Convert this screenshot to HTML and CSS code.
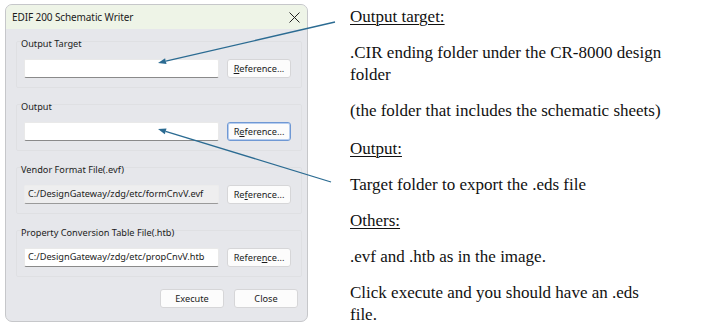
FILE: index.html
```html
<!DOCTYPE html>
<html>
<head>
<meta charset="utf-8">
<link rel="stylesheet" href="styles.css">
</head>
<body>
<div class="page">
  <div class="window">
    <div class="titlebar">
      <span class="title">EDIF 200 Schematic Writer</span>
      <svg class="close" width="11" height="11" viewBox="0 0 11 11"><path d="M0.5 0.5 L10.5 10.5 M10.5 0.5 L0.5 10.5" stroke="#222" stroke-width="1"/></svg>
    </div>
    <div class="body">
      <div class="group">
        <div class="glabel">Output Target</div>
        <div class="row">
          <div class="input"></div>
          <div class="btn"><u>R</u>eference...</div>
        </div>
      </div>
      <div class="group">
        <div class="glabel">Output</div>
        <div class="row">
          <div class="input"></div>
          <div class="btn focus">R<u>e</u>ference...</div>
        </div>
      </div>
      <div class="group">
        <div class="glabel">Vendor Format File(.evf)</div>
        <div class="row">
          <div class="input grey">C:/DesignGateway/zdg/etc/formCnvV.evf</div>
          <div class="btn">Re<u>f</u>erence...</div>
        </div>
      </div>
      <div class="group">
        <div class="glabel">Property Conversion Table File(.htb)</div>
        <div class="row">
          <div class="input">C:/DesignGateway/zdg/etc/propCnvV.htb</div>
          <div class="btn">Refere<u>n</u>ce...</div>
        </div>
      </div>
      <div class="actions">
        <div class="btn">Execute</div>
        <div class="btn">Close</div>
      </div>
    </div>
  </div>
  <div class="notes">
    <p class="head">Output target:</p>
    <p>.CIR ending folder under the CR-8000 design folder</p>
    <p class="gap">(the folder that includes the schematic sheets)</p>
    <p class="head">Output:</p>
    <p>Target folder to export the .eds file</p>
    <p class="head">Others:</p>
    <p>.evf and .htb as in the image.</p>
    <p>Click execute and you should have an .eds file.</p>
  </div>
  <svg class="arrows" width="714" height="329" viewBox="0 0 714 329">
    <line x1="335" y1="22" x2="165.8" y2="61.2" stroke="#2b6b92" stroke-width="1.3"/>
    <polygon points="158,63 166.5,64.1 165.1,58.3" fill="#2b6b92"/>
    <line x1="331" y1="182" x2="165.6" y2="131.3" stroke="#2b6b92" stroke-width="1.3"/>
    <polygon points="158,129 164.8,134.2 166.5,128.5" fill="#2b6b92"/>
  </svg>
</div>
</body>
</html>
```
FILE: styles.css
```css
html, body {
  margin: 0;
  padding: 0;
  background: #ffffff;
}

.page {
  position: relative;
  width: 714px;
  height: 329px;
  display: flex;
  align-items: flex-start;
  padding: 4px 0 0 5px;
  box-sizing: border-box;
  font-family: "Noto Sans", "Open Sans", sans-serif;
}

.window {
  width: 303px;
  height: 318px;
  box-sizing: border-box;
  border: 1px solid #c6c7ca;
  border-radius: 7px;
  background: #e6e7eb;
  overflow: hidden;
  display: flex;
  flex-direction: column;
  flex-shrink: 0;
}

.titlebar {
  height: 24px;
  background: #eef4e7;
  display: flex;
  align-items: center;
  justify-content: space-between;
  padding: 0 7px 0 6px;
  font-size: 10px;
  letter-spacing: -0.1px;
  color: #1b1b1b;
}

.close {
  display: block;
}

.body {
  padding: 12px 0 0 10px;
  display: flex;
  flex-direction: column;
}

.group {
  width: 286px;
  box-sizing: border-box;
  border: 1px solid #dfe0e3;
  border-radius: 2px;
  padding: 0 10px 9px 7px;
  margin-bottom: 16px;
}

.glabel {
  margin-top: -5px;
  height: 14px;
  line-height: 14px;
  font-size: 9.2px;
  color: #1b1b1b;
  margin-left: -3px;
}

.row {
  display: flex;
  gap: 8px;
  margin-top: 8px;
}

.input {
  width: 195px;
  height: 19px;
  box-sizing: border-box;
  background: #ffffff;
  border: 1px solid #e9e9e9;
  border-bottom-color: #8a8a8a;
  border-radius: 2px;
  font-size: 9.2px;
  line-height: 15px;
  padding-left: 3px;
  color: #1b1b1b;
  white-space: nowrap;
  overflow: hidden;
}

.input.grey {
  background: #eeeeef;
  border-color: #ececec;
  border-bottom-color: #9a9a9a;
}

.btn {
  width: 64px;
  height: 19px;
  box-sizing: border-box;
  background: #fcfcfc;
  border: 1px solid #d6d6d8;
  border-radius: 3px;
  font-size: 9.2px;
  line-height: 17px;
  text-align: center;
  color: #1b1b1b;
}

.btn u {
  text-decoration-thickness: 1px;
  text-underline-offset: 1px;
}

.btn.focus {
  border-color: #6f98d4;
  box-shadow: inset 0 0 0 1px #b6cdef;
}

.actions {
  display: flex;
  justify-content: flex-end;
  gap: 10px;
  margin-top: -4px;
  padding-right: 9px;
}

.notes {
  margin-left: 42px;
  margin-top: 2px;
  width: 318px;
  font-family: "Liberation Serif", "Times New Roman", serif;
  font-size: 17px;
  line-height: 22px;
  color: #111111;
}

.notes p {
  margin: 0 0 14px 0;
}

.notes p.gap {
  margin-bottom: 16px;
}

.notes .head {
  text-decoration: underline;
  text-decoration-thickness: 1px;
  text-underline-offset: 2px;
}

.arrows {
  position: absolute;
  left: 0;
  top: 0;
  pointer-events: none;
}
```
